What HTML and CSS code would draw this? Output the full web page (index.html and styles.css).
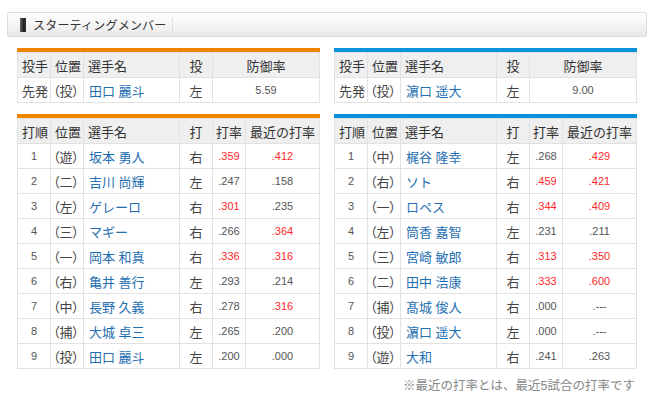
FILE: index.html
```html
<!DOCTYPE html>
<html lang="ja">
<head>
<meta charset="utf-8">
<title>スターティングメンバー</title>
<link rel="stylesheet" href="styles.css">
</head>
<body>
<div class="page">
  <div class="title-bar">
    <span class="mark"></span>
    <h2 class="title">スターティングメンバー</h2>
    <span class="sep"></span>
  </div>

  <div class="cols">
    <div class="col">
      <div class="tbl-wrap orange">
        <table class="tbl">
          <colgroup><col class="w33"><col class="w33"><col class="w96"><col class="w33"><col></colgroup>
          <tr><th>投手</th><th>位置</th><th>選手名</th><th class="c">投</th><th class="c">防御率</th></tr>
          <tr><td>先発</td><td class="pos">（投）</td><td class="name">田口 麗斗</td><td class="c hand">左</td><td class="c num">5.59</td></tr>
        </table>
      </div>
      <div class="tbl-wrap orange gap">
        <table class="tbl">
          <colgroup><col class="w33"><col class="w33"><col class="w96"><col class="w33"><col class="w33"><col></colgroup>
          <tr><th>打順</th><th>位置</th><th>選手名</th><th class="c">打</th><th class="c">打率</th><th class="c">最近の打率</th></tr>
          <tr><td class="c num">1</td><td class="pos">（遊）</td><td class="name">坂本 勇人</td><td class="c hand">右</td><td class="c num red">.359</td><td class="c num red">.412</td></tr>
          <tr><td class="c num">2</td><td class="pos">（二）</td><td class="name">吉川 尚輝</td><td class="c hand">左</td><td class="c num">.247</td><td class="c num">.158</td></tr>
          <tr><td class="c num">3</td><td class="pos">（左）</td><td class="name">ゲレーロ</td><td class="c hand">右</td><td class="c num red">.301</td><td class="c num">.235</td></tr>
          <tr><td class="c num">4</td><td class="pos">（三）</td><td class="name">マギー</td><td class="c hand">右</td><td class="c num">.266</td><td class="c num red">.364</td></tr>
          <tr><td class="c num">5</td><td class="pos">（一）</td><td class="name">岡本 和真</td><td class="c hand">右</td><td class="c num red">.336</td><td class="c num red">.316</td></tr>
          <tr><td class="c num">6</td><td class="pos">（右）</td><td class="name">亀井 善行</td><td class="c hand">左</td><td class="c num">.293</td><td class="c num">.214</td></tr>
          <tr><td class="c num">7</td><td class="pos">（中）</td><td class="name">長野 久義</td><td class="c hand">右</td><td class="c num">.278</td><td class="c num red">.316</td></tr>
          <tr><td class="c num">8</td><td class="pos">（捕）</td><td class="name">大城 卓三</td><td class="c hand">左</td><td class="c num">.265</td><td class="c num">.200</td></tr>
          <tr><td class="c num">9</td><td class="pos">（投）</td><td class="name">田口 麗斗</td><td class="c hand">左</td><td class="c num">.200</td><td class="c num">.000</td></tr>
        </table>
      </div>
    </div>

    <div class="col">
      <div class="tbl-wrap blue">
        <table class="tbl">
          <colgroup><col class="w33"><col class="w33"><col class="w96"><col class="w33"><col></colgroup>
          <tr><th>投手</th><th>位置</th><th>選手名</th><th class="c">投</th><th class="c">防御率</th></tr>
          <tr><td>先発</td><td class="pos">（投）</td><td class="name">濵口 遥大</td><td class="c hand">左</td><td class="c num">9.00</td></tr>
        </table>
      </div>
      <div class="tbl-wrap blue gap">
        <table class="tbl">
          <colgroup><col class="w33"><col class="w33"><col class="w96"><col class="w33"><col class="w33"><col></colgroup>
          <tr><th>打順</th><th>位置</th><th>選手名</th><th class="c">打</th><th class="c">打率</th><th class="c">最近の打率</th></tr>
          <tr><td class="c num">1</td><td class="pos">（中）</td><td class="name">梶谷 隆幸</td><td class="c hand">左</td><td class="c num">.268</td><td class="c num red">.429</td></tr>
          <tr><td class="c num">2</td><td class="pos">（右）</td><td class="name">ソト</td><td class="c hand">右</td><td class="c num red">.459</td><td class="c num red">.421</td></tr>
          <tr><td class="c num">3</td><td class="pos">（一）</td><td class="name">ロペス</td><td class="c hand">右</td><td class="c num red">.344</td><td class="c num red">.409</td></tr>
          <tr><td class="c num">4</td><td class="pos">（左）</td><td class="name">筒香 嘉智</td><td class="c hand">左</td><td class="c num">.231</td><td class="c num">.211</td></tr>
          <tr><td class="c num">5</td><td class="pos">（三）</td><td class="name">宮崎 敏郎</td><td class="c hand">右</td><td class="c num red">.313</td><td class="c num red">.350</td></tr>
          <tr><td class="c num">6</td><td class="pos">（二）</td><td class="name">田中 浩康</td><td class="c hand">右</td><td class="c num red">.333</td><td class="c num red">.600</td></tr>
          <tr><td class="c num">7</td><td class="pos">（捕）</td><td class="name">髙城 俊人</td><td class="c hand">右</td><td class="c num">.000</td><td class="c num">.---</td></tr>
          <tr><td class="c num">8</td><td class="pos">（投）</td><td class="name">濵口 遥大</td><td class="c hand">左</td><td class="c num">.000</td><td class="c num">.---</td></tr>
          <tr><td class="c num">9</td><td class="pos">（遊）</td><td class="name">大和</td><td class="c hand">右</td><td class="c num">.241</td><td class="c num">.263</td></tr>
        </table>
      </div>
    </div>
  </div>

  <p class="note">※最近の打率とは、最近5試合の打率です</p>
</div>
</body>
</html>
```

FILE: styles.css
```css
* { box-sizing: border-box; }

body {
  margin: 0;
  background: #ffffff;
  font-family: "Liberation Sans", "Noto Sans CJK JP", sans-serif;
  color: #333333;
}

.page {
  padding: 12px 0 0 7px;
  width: 650px;
}

.title-bar {
  width: 640px;
  height: 25px;
  display: flex;
  align-items: center;
  border: 1px solid #dcdcdc;
  border-radius: 2px;
  background: linear-gradient(#fdfdfd, #f5f5f5 50%, #e8e8e8);
  padding-left: 12px;
}

.mark {
  width: 6px;
  height: 14px;
  background: linear-gradient(90deg, #666, #222 60%, #333);
  margin-right: 7px;
}

.title {
  margin: 0;
  font-size: 12px;
  font-weight: normal;
  color: #333;
  letter-spacing: 0.2px;
}

.sep {
  width: 0;
  height: 13px;
  border-left: 1px dotted #c8c8c8;
  margin-left: 6px;
}

.cols {
  display: grid;
  grid-template-columns: 303px 303px;
  column-gap: 14px;
  margin: 11px 0 0 10px;
}

.tbl-wrap {
  border-top: 4px solid #ef8200;
}
.tbl-wrap.blue {
  border-top-color: #0a93da;
}
.tbl-wrap.gap {
  margin-top: 11px;
}

.tbl {
  width: 303px;
  border-collapse: collapse;
  table-layout: fixed;
  font-size: 13px;
}

.w33 { width: 33px; }
.w96 { width: 96px; }

.tbl th,
.tbl td {
  border: 1px solid #e2e2e2;
  height: 25px;
  padding: 0 0 0 4px;
  white-space: nowrap;
  overflow: hidden;
  text-align: left;
  font-weight: normal;
  vertical-align: middle;
}

.tbl th {
  background: #efefef;
  color: #333;
}

.tbl .c {
  text-align: center;
  padding: 0;
}

.tbl td {
  color: #444;
}

.tbl td.pos {
  font-family: "Noto Sans CJK JP", sans-serif;
  font-feature-settings: "palt";
  padding-left: 2px;
}

.tbl td.name {
  color: #1f6fb2;
  padding-left: 5px;
}

.tbl td.num {
  font-size: 11px;
  color: #555;
}

.tbl td.red {
  color: #ff2a2a;
}

.note {
  margin: 6px 0 0;
  width: 628px;
  text-align: right;
  font-size: 12.5px;
  color: #888;
}
```
